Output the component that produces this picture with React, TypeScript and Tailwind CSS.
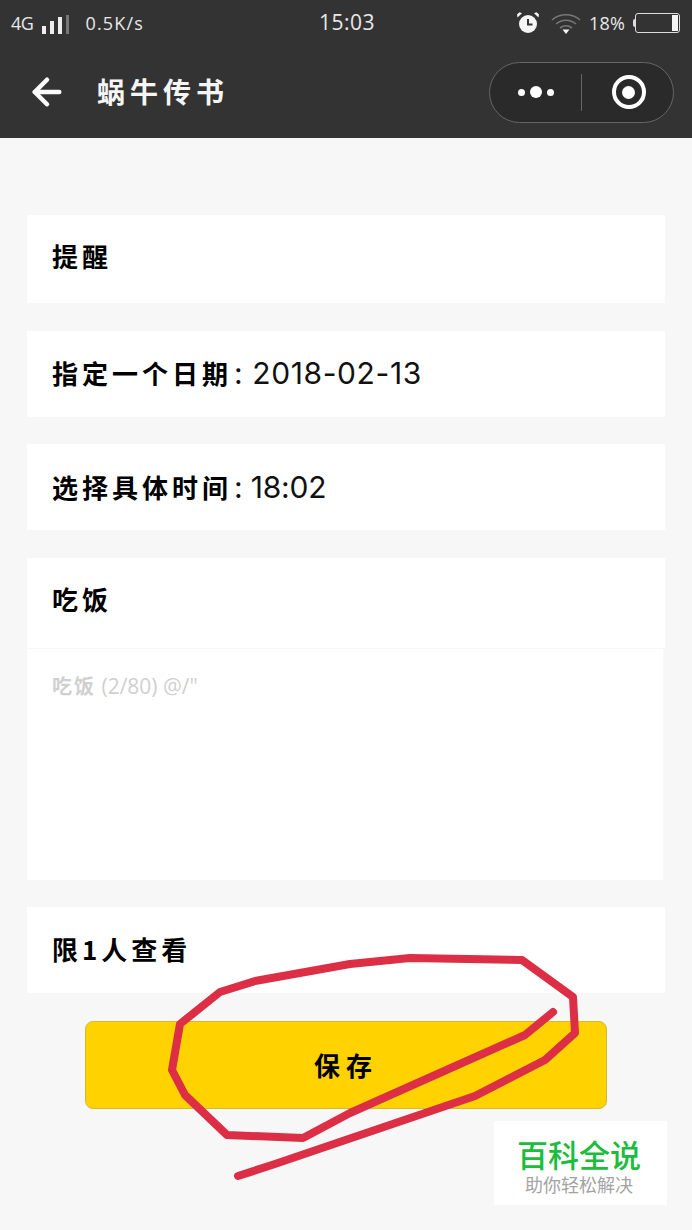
import React from 'react';
import { ArrowLeft } from 'lucide-react';

const cjk = "font-['Noto_Sans_CJK_SC','Noto_Sans_CJK_TC',sans-serif]";
const latin = "font-['Open_Sans','Noto_Sans_CJK_SC',sans-serif]";
const digits = "font-['Inter','Noto_Sans_CJK_SC',sans-serif]";

const Label: React.FC<{ children: React.ReactNode; className?: string }> = ({ children, className }) => (
  <span className={`${cjk} text-[26px] font-bold leading-none tracking-[4px] text-black ${className ?? ''}`}>{children}</span>
);

const Row: React.FC<{ className: string; children: React.ReactNode }> = ({ className, children }) => (
  <div className={`flex w-[638px] items-center bg-white pl-[25px] ${className}`}>{children}</div>
);

const StatusBar = () => (
  <div className="relative flex h-[46px] items-center justify-between pl-[11px] pr-[12px] text-[#e8e8e8]">
    <div className="flex items-center">
      <span className={`${latin} text-[18px] tracking-[-0.5px]`}>4G</span>
      <div className="ml-[9px] mt-[3px] flex items-end gap-[4px]">
        <div className="h-[8px] w-[4px] bg-[#eeeeee]" />
        <div className="h-[13px] w-[4px] bg-[#eeeeee]" />
        <div className="h-[17px] w-[4px] bg-[#eeeeee]" />
        <div className="h-[19px] w-[3px] bg-[#777777]" />
      </div>
      <span className={`${latin} ml-[16px] text-[18px] tracking-[1.2px]`}>0.5K/s</span>
    </div>
    <span className={`${latin} absolute left-[319px] text-[21px] tracking-[0.5px]`}>15:03</span>
    <div className="flex items-center">
      <svg width="24" height="24" viewBox="0 0 24 24" className="mt-[-1px]">
        <circle cx="12" cy="13" r="9" fill="#f5f5f5" />
        <path d="M12 8v5.5h4.5" fill="none" stroke="#333" strokeWidth="2" />
        <path d="M1.5 6.5 6 2.2 3.5 1.2 1 3.5zM22.5 6.5 18 2.2l2.5-1 2.5 2.3z" fill="#f5f5f5" />
      </svg>
      <svg width="32" height="24" viewBox="0 0 32 24" className="ml-[10px]">
        <path d="M2 9c8-7 20-7 28 0M6 13c6-5 14-5 20 0M10 17c4-3 8-3 12 0" fill="none" stroke="#777" strokeWidth="1.6" />
        <path d="M12.5 18.5h7L16 23z" fill="#f5f5f5" />
      </svg>
      <span className={`${latin} ml-[7px] text-[18px] tracking-[0.2px]`}>18%</span>
      <div className="ml-[8px] h-[8px] w-[2px] rounded-l-sm bg-[#dddddd]" />
      <div className="flex h-[20px] w-[45px] items-center justify-end rounded-[3px] border-[1.5px] border-[#dddddd] p-[1px]">
        <div className="h-full w-[6px] bg-[#f5f5f5]" />
      </div>
    </div>
  </div>
);

const NavBar = () => (
  <div className="flex h-[92px] items-center justify-between pl-[26px] pr-[18px]">
    <div className="flex items-center">
      <ArrowLeft size={42} strokeWidth={2.6} color="#fafafa" />
      <span className={`${cjk} ml-[29px] mb-[2px] text-[28px] font-bold leading-none tracking-[5px] text-[#f5f5f5]`}>蜗牛传书</span>
    </div>
    <div className="flex h-[61px] w-[185px] items-center rounded-full border-[1.5px] border-[#666666] bg-[#2a2a2a]">
      <div className="flex w-[91px] items-center justify-center gap-[5px]">
        <div className="h-[7px] w-[7px] rounded-full bg-white" />
        <div className="h-[12px] w-[12px] rounded-full bg-white" />
        <div className="h-[7px] w-[7px] rounded-full bg-white" />
      </div>
      <div className="h-[37px] w-px bg-[#666666]" />
      <div className="flex flex-1 items-center justify-center pl-[2px]">
        <div className="flex h-[34px] w-[34px] items-center justify-center rounded-full border-[4px] border-white">
          <div className="h-[13px] w-[13px] rounded-full bg-white" />
        </div>
      </div>
    </div>
  </div>
);

export default function App() {
  return (
    <div className="relative h-[1230px] w-[692px] overflow-hidden bg-[#f7f7f7]">
      <div className="bg-[#333333]">
        <StatusBar />
        <NavBar />
      </div>

      <div className="flex flex-col pl-[27px] pt-[77px]">
        <Row className="h-[88px] pb-[6px]">
          <Label>提醒</Label>
        </Row>
        <Row className="mt-[28px] h-[86px] pb-[3px]">
          <Label>指定一个日期</Label>
          <span className={`${digits} ml-[2px] text-[30px] leading-none tracking-[0.6px] text-[#111111]`}>: 2018-02-13</span>
        </Row>
        <Row className="mt-[27px] h-[86px]">
          <Label>选择具体时间</Label>
          <span className={`${digits} ml-[2px] text-[30px] leading-none tracking-[-0.2px] text-[#111111]`}>: 18:02</span>
        </Row>
        <Row className="mt-[28px] h-[90px] pb-[9px]">
          <Label>吃饭</Label>
        </Row>
        <div className="mt-px h-[231px] w-[636px] bg-white pl-[25px] pt-[27px]">
          <span className={`${latin} text-[21px] leading-none text-[#d0d0d0]`}>
            <span className={`${cjk} text-[20px] font-bold tracking-[2px]`}>吃饭</span> (2/80) @/"
          </span>
        </div>
        <Row className="mt-[27px] h-[86px] pb-[2px]">
          <Label className="tracking-[3px]">限1人查看</Label>
        </Row>
        <button className="mt-[28px] ml-[58px] flex h-[88px] w-[522px] items-center justify-center rounded-[8px] border border-[#d6ba2e] bg-[#ffd200]">
          <Label className="tracking-[6px]">保存</Label>
        </button>
      </div>

      {/* red marker scribble drawn over the page */}
      <svg className="pointer-events-none absolute inset-0" width="692" height="1230" viewBox="0 0 692 1230">
        <path
          d="M238 1176 272 1165 475 1096 545 1060 575 1033 573 997 522 960 410 958 350 964 255 981 220 992 180 1024 172 1070 185 1095 227 1135 303 1138 350 1113 525 1035 553 1012"
          fill="none"
          stroke="#dc2f45"
          strokeWidth="8"
          strokeLinecap="round"
          strokeLinejoin="round"
        />
      </svg>

      <div className="absolute left-[494px] top-[1121px] flex h-[84px] w-[173px] flex-col items-center bg-white pr-[3px] pt-[17px]">
        <span className={`${cjk} text-[31px] font-medium leading-none text-[#1cbc3c]`}>百科全说</span>
        <span className={`${cjk} mt-[6px] text-[18px] leading-none text-[#a3a3a3]`}>助你轻松解决</span>
      </div>
    </div>
  );
}
